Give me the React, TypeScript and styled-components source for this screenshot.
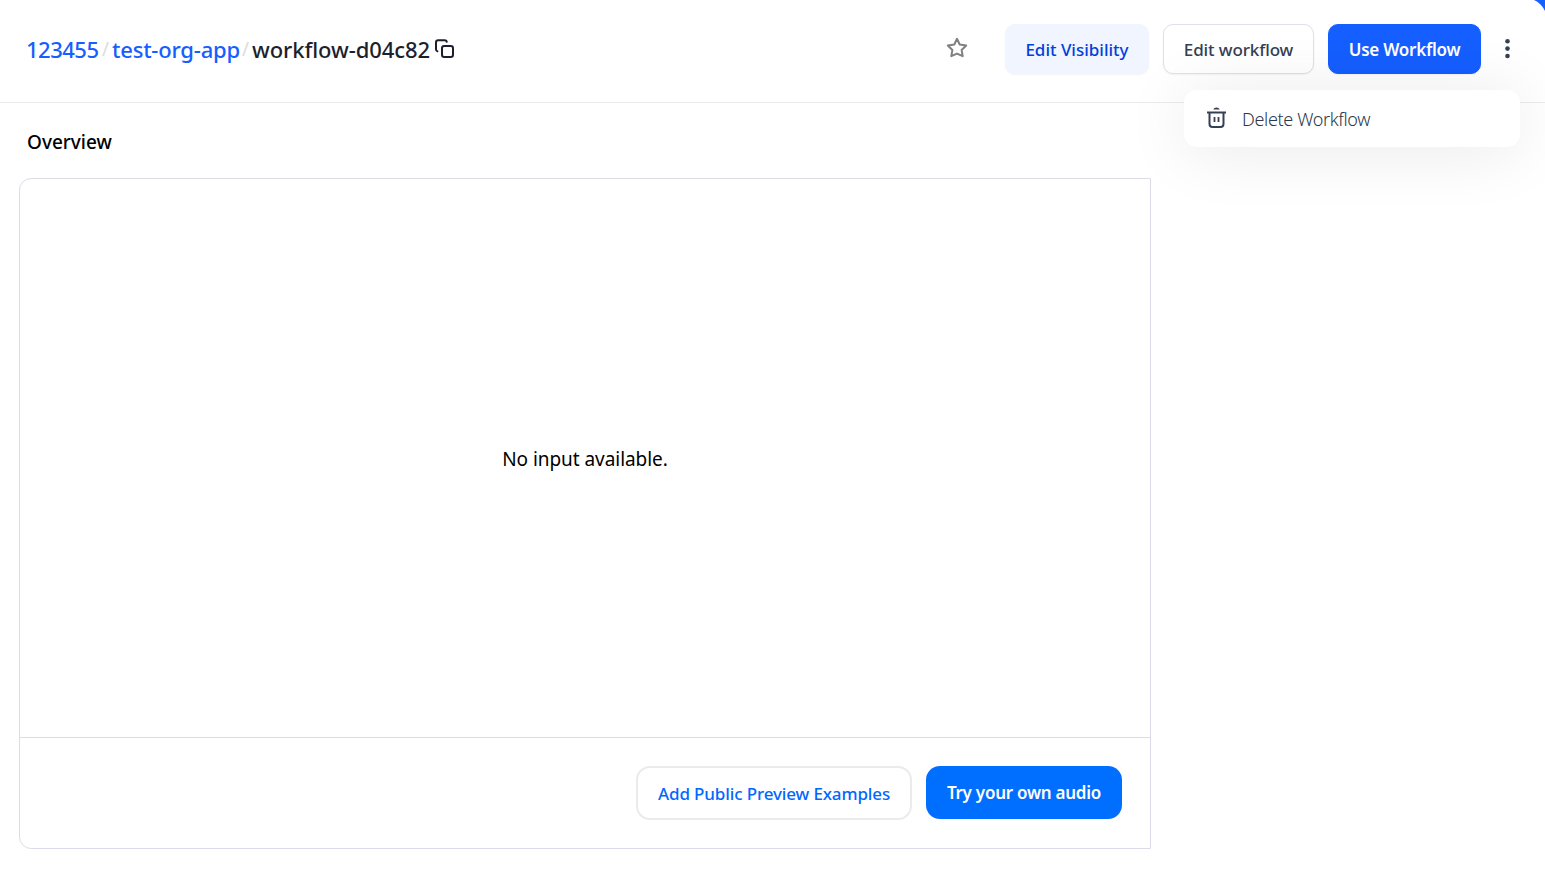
import React from "react";
import styled, { createGlobalStyle } from "styled-components";

const GlobalStyle = createGlobalStyle`
  *, *::before, *::after { box-sizing: border-box; }
  body {
    margin: 0;
    background: #fff;
    color: #000;
    font-family: "Segoe UI", "Noto Sans", sans-serif;
    font-variant-ligatures: none;
    overflow: hidden;
  }
  button { font-family: inherit; cursor: pointer; }
`;

const Page = styled.div`
  position: relative;
  height: 873px;
  overflow: hidden;
`;

const Corner = styled.svg`
  position: absolute;
  top: 0;
  right: 0;
`;

const Header = styled.header`
  display: flex;
  align-items: flex-start;
  justify-content: space-between;
  height: 103px;
  padding: 24px 25px 0 26px;
  border-bottom: 1px solid #ebebed;
`;

const Breadcrumb = styled.nav`
  display: flex;
  align-items: center;
  height: 49px;
  font-size: 22px;
  font-weight: 500;
  line-height: 30px;
  white-space: nowrap;
`;

const Crumb = styled.a<{ $width: number; $spacing?: number }>`
  width: ${(p) => p.$width}px;
  color: #155eff;
  letter-spacing: ${(p) => p.$spacing ?? 0}px;
`;

const Current = styled.span`
  width: 182px;
  color: #1d1f2f;
  letter-spacing: -0.08px;
`;

const Slash = styled.span`
  width: 13px;
  padding-left: 3px;
  color: #dcdce0;
  font-size: 19px;
  font-weight: 400;
`;

const Actions = styled.div`
  position: relative;
  display: flex;
  align-items: flex-start;
  gap: 14px;
`;

const IconButton = styled.button<{ $mr?: number; $height?: number }>`
  display: flex;
  align-items: center;
  height: ${(p) => p.$height ?? 50}px;
  padding: 0;
  margin-right: ${(p) => p.$mr ?? 0}px;
  border: 0;
  background: none;
`;

type Tone = "soft" | "outline" | "primary";

const tones: Record<Tone, string> = {
  soft: "color:#0040dd;background:#f0f5ff;border:1px solid #f0f5ff;",
  outline: "color:#344054;background:#fff;border:1px solid #dfe0e8;",
  primary: "color:#fff;background:#155eff;border:1px solid #155eff;font-weight:600;",
};

const Button = styled.button<{ $tone: Tone; $width: number; $spacing?: number }>`
  width: ${(p) => p.$width}px;
  height: 50px;
  padding: 1px 0 0;
  border-radius: 10px;
  font-size: 17px;
  font-weight: 500;
  line-height: 24px;
  white-space: nowrap;
  box-shadow: 0 1px 2px rgba(16, 24, 40, 0.05);
  ${(p) => tones[p.$tone]}
  letter-spacing: ${(p) => p.$spacing ?? 0}px;
`;

const Menu = styled.div`
  position: absolute;
  top: 66px;
  right: 0;
  width: 336px;
  height: 57px;
  border-radius: 13px;
  background: #fff;
  box-shadow: 0 4px 66px rgba(0, 0, 0, 0.09);
`;

const MenuItem = styled.div`
  display: flex;
  align-items: center;
  gap: 15px;
  height: 57px;
  padding-left: 22px;
  color: #2b374b;
  font-size: 18px;
  font-weight: 300;
  letter-spacing: -0.35px;

  svg { margin-bottom: 2px; }
`;

const Title = styled.h2`
  margin: 25px 0 0 27px;
  font-size: 19px;
  font-weight: 500;
  line-height: 28px;
`;

const Panel = styled.section`
  display: flex;
  flex-direction: column;
  width: 1132px;
  height: 671px;
  margin: 22px 0 0 19px;
  border: 1px solid #dcdce8;
  border-radius: 12px 0 0 12px;
`;

const Empty = styled.div`
  display: flex;
  flex: 1;
  align-items: center;
  justify-content: center;
  padding-top: 2px;
  font-size: 19px;
  letter-spacing: -0.05px;
`;

const Footer = styled.footer`
  display: flex;
  align-items: flex-start;
  justify-content: flex-end;
  gap: 14px;
  height: 111px;
  padding: 28px 28px 0 0;
  border-top: 1px solid #dcdce8;
`;

const FooterButton = styled(Button)<{ $filled?: boolean }>`
  height: ${(p) => (p.$filled ? 53 : 54)}px;
  border: ${(p) => (p.$filled ? "0" : "2px solid #ebebeb")};
  border-radius: 14px;
  background: ${(p) => (p.$filled ? "#006fff" : "#fff")};
  color: ${(p) => (p.$filled ? "#fff" : "#0068ff")};
  box-shadow: none;
`;

export default function App() {
  return (
    <Page>
      <GlobalStyle />
      <Header>
        <Breadcrumb>
          <Crumb $width={73} $spacing={-0.5}>123455</Crumb>
          <Slash>/</Slash>
          <Crumb $width={127} $spacing={-0.2}>test-org-app</Crumb>
          <Slash>/</Slash>
          <Current>workflow-d04c82</Current>
          <IconButton $height={20} aria-label="Copy">
            <svg width="22" height="20" viewBox="0 0 22 20" fill="none" stroke="#1d1f2f" strokeWidth="2" strokeLinecap="round" strokeLinejoin="round">
              <rect x="8" y="7" width="11" height="11" rx="2.2" />
              <path d="M3.400 12.200C2.300 12 2 11.200 2 10.200V3.400C2 2 2.800 1.200 4.200 1.200h6.400c1.200 0 2 .4 2.200 1.500" />
            </svg>
          </IconButton>
        </Breadcrumb>
        <Actions>
          <IconButton $mr={23} $height={48} aria-label="Star">
            <svg width="22" height="22" viewBox="0 0 22 22" fill="none" stroke="#808080" strokeWidth="2" strokeLinejoin="round">
              <path d="M11 1.800l2.700 5.700 6.500.95-4.600 4.500 1.100 6.250L11 16.600 5.300 19.200l1.100-6.250-4.600-4.500 6.500-.95z" />
            </svg>
          </IconButton>
          <Button $tone="soft" $width={144}>Edit Visibility</Button>
          <Button $tone="outline" $width={151} $spacing={-0.1}>Edit workflow</Button>
          <Button $tone="primary" $width={153} $spacing={-0.25}>Use Workflow</Button>
          <IconButton aria-label="More">
            <svg width="25" height="22" viewBox="0 0 25 22" fill="#344054">
              <circle cx="12.5" cy="3.2" r="2.3" />
              <circle cx="12.5" cy="10.6" r="2.3" />
              <circle cx="12.5" cy="18" r="2.3" />
            </svg>
          </IconButton>
          <Menu>
            <MenuItem>
              <svg width="21" height="22" viewBox="0 0 21 22" fill="none" stroke="#344054" strokeWidth="2">
                <path d="M1 5.500h19" />
                <path d="M3.500 5.500v11.500q0 3 3 3h8q3 0 3-3v-11.500" />
                <path d="M8.500 10v5M12.500 10v5" strokeWidth="1.800" />
                <path d="M7.300 2.600C7.800 1.300 9 .6 10.500.6s2.700.7 3.200 2z" fill="#344054" stroke="none" />
              </svg>
              Delete Workflow
            </MenuItem>
          </Menu>
        </Actions>
      </Header>
      <Title>Overview</Title>
      <Panel>
        <Empty>No input available.</Empty>
        <Footer>
          <FooterButton $tone="outline" $width={276} $spacing={-0.13}>Add Public Preview Examples</FooterButton>
          <FooterButton $tone="primary" $width={196} $spacing={-0.25} $filled>Try your own audio</FooterButton>
        </Footer>
      </Panel>
      <Corner width="11" height="12" viewBox="0 0 11 12" fill="#155eff">
        <path d="M0 0C4.600 2 8.500 5.800 11 11V0z" />
      </Corner>
    </Page>
  );
}
